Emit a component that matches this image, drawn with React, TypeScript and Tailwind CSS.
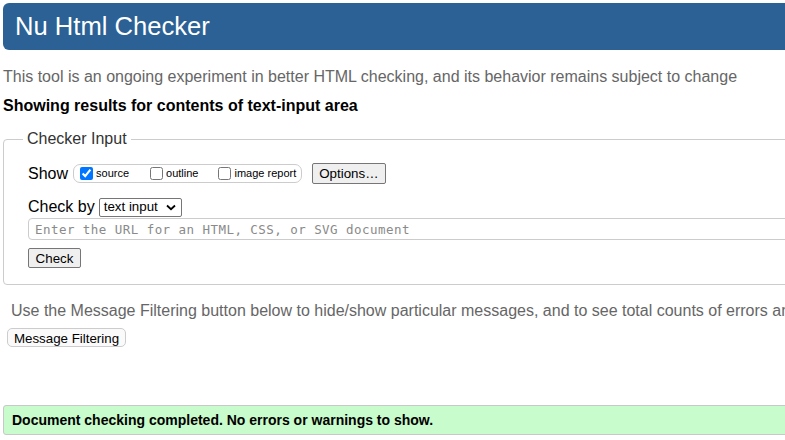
import { useState } from 'react'

// Nu Html Checker results page, clipped to the viewport like the screenshot
export default function App() {
  const [show, setShow] = useState({ source: true, outline: false, image: false })

  return (
    <div className="w-[785px] h-[440px] overflow-hidden bg-white">
      <div className="w-[1200px] font-['Liberation_Sans',Arial,sans-serif] text-[16px] text-black">
        {/* Title bar */}
        <div className="mt-[3px] ml-[3px] h-[47px] rounded-[6px] bg-[#2b6195] flex items-center px-[12px]">
          <h1 className="text-[25.6px] leading-[29px] text-white font-normal">Nu Html Checker</h1>
        </div>

        <p className="mt-[18px] ml-[3px] leading-[18px] text-[#666]">
          This tool is an ongoing experiment in better HTML checking, and its behavior remains subject to change
        </p>
        <p className="mt-[11px] ml-[3px] leading-[18px] font-bold">
          Showing results for contents of text-input area
        </p>

        {/* Checker input form */}
        <fieldset className="mt-[15px] ml-[3px] border border-[#ccc] rounded-[4px] pl-[24px] pr-[24px] pb-[16px]">
          <legend className="ml-[-5px] px-[4px] leading-[18px] text-[#333]">Checker Input</legend>

          <div className="mt-[15px] flex items-center h-[21px]">
            <span className="leading-[18px]">Show</span>
            <div className="ml-[5px] h-[19px] flex items-center border border-[#ccc] rounded-[7px] pl-[6px] pr-[5px] text-[11px]">
              <label className="flex items-center">
                <input
                  type="checkbox"
                  checked={show.source}
                  onChange={() => setShow({ ...show, source: !show.source })}
                  className="w-[13px] h-[13px] m-0 accent-[#0075ff]"
                />
                <span className="ml-[3px]">source</span>
              </label>
              <label className="ml-[21px] flex items-center">
                <input
                  type="checkbox"
                  checked={show.outline}
                  onChange={() => setShow({ ...show, outline: !show.outline })}
                  className="w-[13px] h-[13px] m-0"
                />
                <span className="ml-[3px]">outline</span>
              </label>
              <label className="ml-[20px] flex items-center">
                <input
                  type="checkbox"
                  checked={show.image}
                  onChange={() => setShow({ ...show, image: !show.image })}
                  className="w-[13px] h-[13px] m-0"
                />
                <span className="ml-[3px]">image report</span>
              </label>
            </div>
            <button className="ml-[10px] h-[21px] px-[6px] text-[13.33px] bg-[#efefef] border border-[#767676] rounded-[2px]">
              Options…
            </button>
          </div>

          <div className="mt-[13px] flex items-center h-[20px]">
            <span className="leading-[18px]">Check by</span>
            <div className="ml-[4px] h-[19px] w-[83px] flex items-center justify-between border border-[#767676] rounded-[2px] pl-[4px] pr-[4px] text-[13.33px]">
              <span>text input</span>
              <svg width="10" height="7" viewBox="0 0 10 7" className="mr-[1px]">
                <path d="M1 1.5 L5 5.2 L9 1.5" fill="none" stroke="#000" strokeWidth="1.8" />
              </svg>
            </div>
          </div>

          <input
            type="text"
            placeholder="Enter the URL for an HTML, CSS, or SVG document"
            className="mt-[1px] block w-full h-[22px] border border-[#ccc] rounded-[4px] px-[6px] font-['DejaVu_Sans_Mono',monospace] text-[12.5px] tracking-[0.45px] placeholder:text-[#8a8a8a]"
          />

          <button className="mt-[8px] block h-[20px] w-[53px] text-[13.33px] bg-[#efefef] border border-[#767676] rounded-[2px]">
            Check
          </button>
        </fieldset>

        {/* Message filtering */}
        <div className="pl-[11px]">
          <p className="mt-[17px] leading-[18px] text-[#666]">
            Use the Message Filtering button below to hide/show particular messages, and to see total counts of errors and warnings.
          </p>
        </div>
        <button className="mt-[8px] ml-[7px] h-[19px] w-[119px] text-[13.33px] bg-[#fafafa] border border-[#ccc] rounded-[5px]">
          Message Filtering
        </button>

        {/* Result */}
        <div className="mt-[55px] ml-[3px] h-[30px] flex items-center pl-[8px] bg-[#c8fccc] border border-[#c8c8c8] rounded-[3px]">
          <p className="text-[14px] font-bold">Document checking completed. No errors or warnings to show.</p>
        </div>
      </div>
    </div>
  )
}
